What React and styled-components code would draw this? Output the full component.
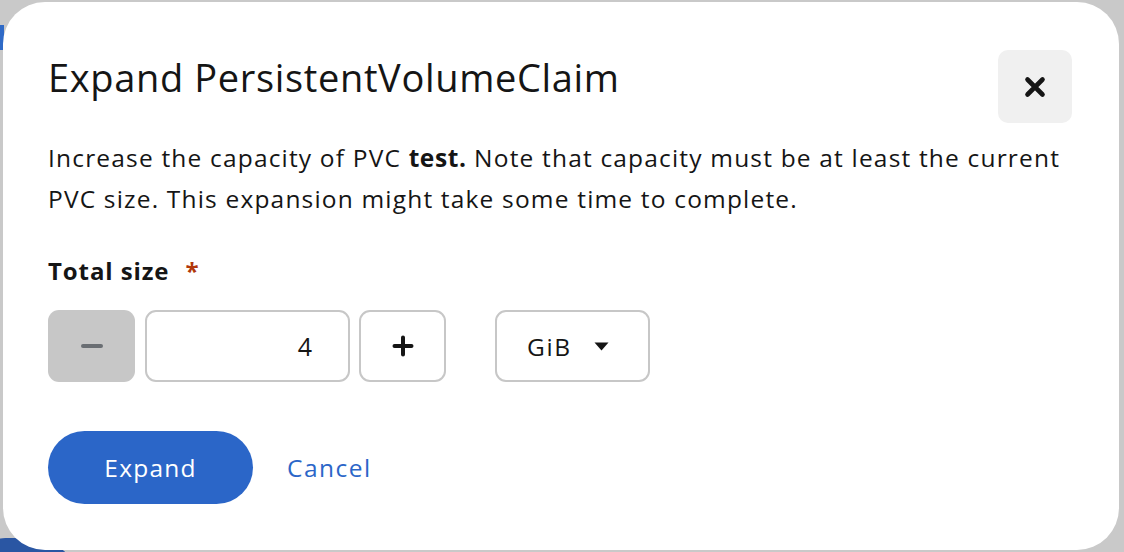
import React from "react";
import styled, { createGlobalStyle } from "styled-components";

const Global = createGlobalStyle`
  html, body { margin: 0; padding: 0; }
  body {
    width: 1124px;
    height: 552px;
    overflow: hidden;
    background:
      radial-gradient(ellipse 60px 22px at 10px 560px, #2a56a3 98%, transparent 100%),
      linear-gradient(#2f6ac7, #2f6ac7) 0 25px / 4px 25px no-repeat,
      #c9c9c9;
    font-family: "Open Sans", "Noto Sans", sans-serif;
    color: #151515;
  }
`;

const Page = styled.div`
  padding: 2px 5px 0 3px;
`;

const Modal = styled.div`
  box-sizing: border-box;
  height: 548px;
  background: #fff;
  border-radius: 42px;
  padding: 48px 47px 0 45px;
  display: flex;
  flex-direction: column;
`;

const Header = styled.div`
  display: flex;
  justify-content: space-between;
  align-items: flex-start;
`;

const Title = styled.h1`
  margin: 0;
  font-size: 38px;
  line-height: 54px;
  font-weight: 500;
  letter-spacing: 0.65px;
`;

const CloseButton = styled.button`
  width: 74px;
  height: 73px;
  border: none;
  border-radius: 10px;
  background: #f0f0f0;
  display: flex;
  align-items: center;
  justify-content: center;
  padding: 0;
  cursor: pointer;
`;

const Description = styled.p`
  margin: 14px 0 0 0;
  font-size: 24.5px;
  line-height: 41px;
  letter-spacing: 1.18px;
  b { font-weight: 700; letter-spacing: 0.6px; }
`;

const Label = styled.div`
  margin: 34px 0 0 0;
  font-size: 24px;
  line-height: 36px;
  font-weight: 700;
  letter-spacing: 0.9px;
  display: flex;
  align-items: baseline;
`;

const Required = styled.span`
  color: #b1380b;
  margin-left: 16px;
  font-weight: 700;
`;

const Row = styled.div`
  margin: 21px 0 0 0;
  display: flex;
  align-items: center;
`;

const Stepper = styled.div`
  display: flex;
  gap: 9px;
  margin-right: 49px;
`;

const StepButton = styled.button`
  box-sizing: border-box;
  width: 87px;
  height: 72px;
  border-radius: 11px;
  border: ${p => (p.disabled ? "none" : "2px solid #c7c7c7")};
  background: ${p => (p.disabled ? "#c7c7c7" : "#fff")};
  display: flex;
  align-items: center;
  justify-content: center;
  padding: 0;
`;

const NumberInput = styled.div`
  box-sizing: border-box;
  width: 205px;
  height: 72px;
  border: 2px solid #c7c7c7;
  border-radius: 11px;
  display: flex;
  align-items: center;
  justify-content: flex-end;
  padding-right: 36px;
  font-size: 25px;
  margin-left: 1px;
`;

const Select = styled.div`
  box-sizing: border-box;
  width: 155px;
  height: 72px;
  border: 2px solid #c7c7c7;
  border-radius: 11px;
  display: flex;
  align-items: center;
  padding-left: 30px;
  gap: 22px;
  font-size: 24.5px;
  letter-spacing: 1.6px;
`;

const Footer = styled.div`
  margin: 49px 0 0 0;
  display: flex;
  align-items: center;
`;

const PrimaryButton = styled.button`
  width: 205px;
  height: 73px;
  border: none;
  border-radius: 37px;
  background: #2b66c8;
  color: #fff;
  font-family: inherit;
  font-size: 24.5px;
  letter-spacing: 1.2px;
  padding: 0;
`;

const LinkButton = styled.button`
  border: none;
  background: none;
  color: #2b66c8;
  font-family: inherit;
  font-size: 24.5px;
  letter-spacing: 1.5px;
  padding: 0;
  margin-left: 34px;
`;

export default function App() {
  return (
    <>
      <Global />
      <Page>
        <Modal>
          <Header>
            <Title>Expand PersistentVolumeClaim</Title>
            <CloseButton aria-label="Close">
              <svg width="22" height="22" viewBox="0 0 22 22">
                <path d="M3.5 3.5 L18.5 18.5 M18.5 3.5 L3.5 18.5" stroke="#151515" strokeWidth="4.6" strokeLinecap="round" />
              </svg>
            </CloseButton>
          </Header>
          <Description>
            Increase the capacity of PVC <b>test.</b> Note that capacity must be at least the current PVC size. This expansion might take some time to complete.
          </Description>
          <Label>
            Total size<Required>*</Required>
          </Label>
          <Row>
            <Stepper>
              <StepButton disabled aria-label="Decrement">
                <svg width="22" height="6" viewBox="0 0 22 6">
                  <path d="M2 3 H20" stroke="#6a6e73" strokeWidth="4" strokeLinecap="round" />
                </svg>
              </StepButton>
              <NumberInput>4</NumberInput>
              <StepButton aria-label="Increment">
                <svg width="22" height="22" viewBox="0 0 22 22">
                  <path d="M2.5 11 H19.5 M11 2.5 V19.5" stroke="#151515" strokeWidth="4" strokeLinecap="round" />
                </svg>
              </StepButton>
            </Stepper>
            <Select>
              GiB
              <svg width="15" height="9" viewBox="0 0 15 9">
                <path d="M0.5 0.5 H14.5 L7.5 8.5 Z" fill="#151515" />
              </svg>
            </Select>
          </Row>
          <Footer>
            <PrimaryButton>Expand</PrimaryButton>
            <LinkButton>Cancel</LinkButton>
          </Footer>
        </Modal>
      </Page>
    </>
  );
}
